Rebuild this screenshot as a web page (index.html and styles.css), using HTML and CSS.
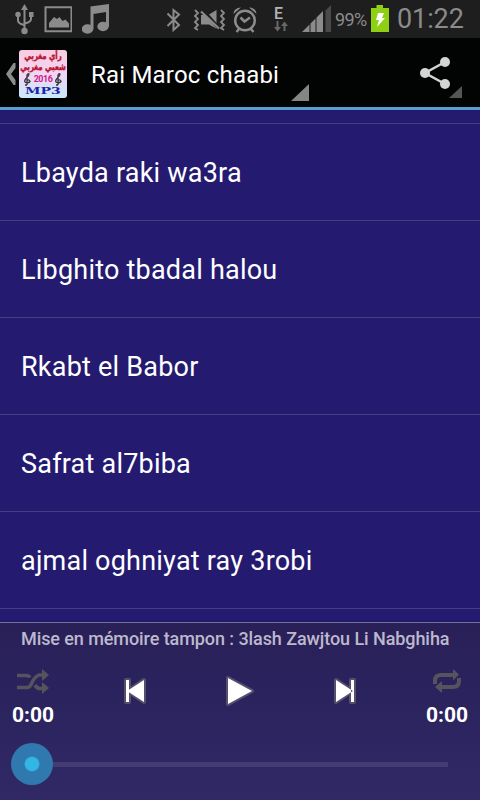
FILE: index.html
```html
<!DOCTYPE html>
<html lang="fr">
<head>
    <meta charset="UTF-8">
    <meta name="viewport" content="width=device-width, initial-scale=1.0">
    <title>Rai Maroc chaabi</title>
    <link rel="stylesheet" href="styles.css">
</head>
<body>
    <div class="status-bar">
        <div class="status-left">
            <!-- usb -->
            <svg width="20" height="38" viewBox="14 0 20 38">
                <path d="M24.500 9V31M18 16v4.500q0 3 6 4.500M31 15v4q0 3-6 4.500" fill="none" stroke="#8b8b8b" stroke-width="2"/>
                <path d="M24.500 4l3.500 6h-7zM29 12h4.500v5H29z" fill="#8b8b8b"/>
                <circle cx="18" cy="14.500" r="2.700" fill="#8b8b8b"/>
                <circle cx="24.500" cy="31" r="3.200" fill="#8b8b8b"/>
            </svg>
            <!-- picture -->
            <svg width="28" height="38" viewBox="45 0 28 38">
                <path d="M46.500 7.200h26v24h-26z" fill="none" stroke="#8b8b8b" stroke-width="2"/>
                <path d="M50 27.500V23l5-6 3 2 2.500-2 3 4 3-1.500 3.500 4v4z" fill="#8b8b8b"/>
            </svg>
            <!-- music -->
            <svg width="28" height="38" viewBox="82 0 28 38">
                <path d="M90.500 6.500L109 4v23h-3V12l-12.500 2v15h-3z" fill="#8b8b8b"/>
                <ellipse cx="87.500" cy="29" rx="5.800" ry="4.700" fill="#8b8b8b"/>
                <ellipse cx="103" cy="26.500" rx="5.700" ry="4.700" fill="#8b8b8b"/>
            </svg>
        </div>
        <div class="status-right">
            <!-- bluetooth -->
            <svg width="16" height="38" viewBox="166 0 16 38">
                <path d="M167.500 13.500l11.500 11.500-5.500 5V10l5.500 4.500-11.500 11.500" fill="none" stroke="#8b8b8b" stroke-width="2"/>
            </svg>
            <!-- vibrate / muted -->
            <svg width="34" height="38" viewBox="193 0 34 38">
                <path d="M195 10l3 3-3 3 3 3-3 3 3 3-3 3 3 2M221 10l3 3-3 3 3 3-3 3 3 3-3 3 3 2" fill="none" stroke="#8b8b8b" stroke-width="1.800"/>
                <path d="M201 15h4l12 14-8-4.500h-8zM209 14.500l7.500-4.500v13z" fill="#8b8b8b"/>
                <path d="M201 11.500L219 28.500" stroke="#8b8b8b" stroke-width="2.200"/>
            </svg>
            <!-- alarm -->
            <svg width="26" height="38" viewBox="232 0 26 38">
                <circle cx="245" cy="20.500" r="9.800" fill="none" stroke="#8b8b8b" stroke-width="2.500"/>
                <path d="M240.500 17.500l4 4 5.500-4M239 29l-2.500 3M251 29l2.500 3" fill="none" stroke="#8b8b8b" stroke-width="2.500"/>
                <path d="M233.500 14q0-6 7.500-6.500zM256.500 14q0-6-7.500-6.500z" fill="#8b8b8b"/>
            </svg>
            <div class="network">
                <span>E</span>
                <svg width="14" height="11" viewBox="0 0 14 11">
                    <path d="M2.500 0h2v6H7l-3.500 4.500L0 6h2.500zM9.500 10h2V5H14l-3.500-4.500L7 5h2.500z" fill="#686868"/>
                </svg>
            </div>
            <!-- signal -->
            <svg width="29" height="38" viewBox="302 0 29 38">
                <path d="M325.500 10.500L331 5v27h-5.500z" fill="#4a4a4a"/>
                <path d="M302 32l7.500-7.500V32zM310.500 23.500l5-5V32h-5zM316.500 17.500l6.500-6.500v21h-6.500z" fill="#8b8b8b"/>
            </svg>
            <span class="percent">99%</span>
            <!-- battery -->
            <svg width="18" height="38" viewBox="371 0 18 38">
                <path d="M371 8h5.500V5h6.500v3h6v24h-18z" fill="#8fd014"/>
                <path d="M378 13h6l-2 5h3l-8 9 2-7h-3z" fill="#fff"/>
            </svg>
            <span class="clock">01:22</span>
        </div>
    </div>

    <div class="header">
        <svg class="back" width="11" height="22" viewBox="0 0 11 22">
            <path d="M9.500 0v5L5 11l4.500 6v5H7.500L0 11 7.500 0z" fill="#8c8c8c"/>
        </svg>
        <div class="logo">
            <span class="logo-arabic">رأي مغربي</span>
            <span class="logo-arabic">شعبي مغربي</span>
            <div class="logo-year">
                <svg width="7" height="13" viewBox="0 0 7 13">
                    <path d="M3 12V2q1-2 2-1 0 2-2.500 4Q0 7 1 9q3 2 5-.5Q5.500 6 3 7.500M1 12h2" fill="none" stroke="#333" stroke-width="1.300"/>
                </svg>
                <span>2016</span>
                <svg width="7" height="13" viewBox="0 0 7 13">
                    <path d="M3 12V2q1-2 2-1 0 2-2.500 4Q0 7 1 9q3 2 5-.5Q5.500 6 3 7.500M1 12h2" fill="none" stroke="#333" stroke-width="1.300"/>
                </svg>
            </div>
            <span class="logo-mp3">MP3</span>
        </div>
        <div class="title">Rai Maroc chaabi</div>
        <svg class="spinner" width="18" height="17" viewBox="0 0 18 17">
            <path d="M18 0v17H0z" fill="#858585"/>
        </svg>
        <svg class="share" width="43" height="42" viewBox="419 56 43 42">
            <path d="M445 62l-20 11 20 11" fill="none" stroke="#d4d4d4" stroke-width="2.500"/>
            <circle cx="445" cy="62" r="5" fill="#d4d4d4"/>
            <circle cx="425" cy="73" r="5" fill="#d4d4d4"/>
            <circle cx="445" cy="84" r="5" fill="#d4d4d4"/>
            <path d="M462 86v12h-13z" fill="#555"/>
        </svg>
    </div>

    <div class="list">
        <div class="row row-cut"></div>
        <div class="row">Lbayda raki wa3ra</div>
        <div class="row">Libghito tbadal halou</div>
        <div class="row">Rkabt el Babor</div>
        <div class="row">Safrat al7biba</div>
        <div class="row">ajmal oghniyat ray 3robi</div>
    </div>

    <div class="player">
        <div class="now-playing">Mise en mémoire tampon : 3lash Zawjtou Li Nabghiha</div>
        <div class="controls">
            <div class="side">
                <svg width="34" height="28" viewBox="16 668 34 28">
                    <path d="M17 675.500h9q3 0 4 2M17 687.500h10q3 0 5-5t7-7.500h5M35 685q2 3.500 5 3.500h4" fill="none" stroke="#56535c" stroke-width="3.600"/>
                    <path d="M42 669l7 6-7 6zM42 682l7 6-7 6z" fill="#56535c"/>
                </svg>
                <span class="time">0:00</span>
            </div>
            <div class="buttons">
                <svg width="30" height="34" viewBox="120 674 30 34">
                    <path d="M126 680h3v22h-3zM144 680v22l-16-11z" fill="#fff" stroke="#56506d" stroke-width="4" stroke-linejoin="round"/>
                    <path d="M126 680h3v22h-3zM144 680v22l-17-11z" fill="#fff"/>
                </svg>
                <svg width="34" height="34" viewBox="223 674 34 34">
                    <path d="M228 678v26l24-13z" fill="#fff" stroke="#56506d" stroke-width="4" stroke-linejoin="round"/>
                    <path d="M228 678v26l24-13z" fill="#fff"/>
                </svg>
                <svg width="30" height="34" viewBox="330 674 30 34">
                    <path d="M351 680h3v22h-3zM336 680v22l16-11z" fill="#fff" stroke="#56506d" stroke-width="4" stroke-linejoin="round"/>
                    <path d="M351 680h3v22h-3zM336 680v22l17-11z" fill="#fff"/>
                </svg>
            </div>
            <div class="side">
                <svg width="30" height="28" viewBox="432 668 30 28">
                    <path d="M435 684v-3q0-6 6-6h13M459 678v3q0 6-6 6h-14" fill="none" stroke="#56535c" stroke-width="4"/>
                    <path d="M453 669l6 5.500-6 6zM442 681l-7 6 7 6z" fill="#56535c"/>
                </svg>
                <span class="time">0:00</span>
            </div>
        </div>
        <div class="seek">
            <div class="thumb"></div>
            <div class="track"></div>
        </div>
    </div>
</body>
</html>
```

FILE: styles.css
```css
body {
    margin: 0;
    width: 480px;
    height: 800px;
    display: flex;
    flex-direction: column;
    overflow: hidden;
    background-color: #241b70;
    font-family: Roboto, sans-serif;
    color: #fff;
}

svg {
    display: block;
    flex-shrink: 0;
}

.status-bar {
    height: 38px;
    flex-shrink: 0;
    display: flex;
    justify-content: space-between;
    background: #1e1e1e;
    color: #8b8b8b;
}

.status-left {
    display: flex;
    gap: 10px;
    padding-left: 14px;
}

.status-right {
    width: 314px;
    display: flex;
}

.status-right > svg:nth-child(2) {
    margin-left: 11px;
}

.status-right > svg:nth-child(3) {
    margin-left: 5px;
}

.network {
    width: 14px;
    margin: 5px 14px 0 16px;
}

.network span {
    display: block;
    height: 16px;
    font-size: 16px;
    line-height: 17px;
    font-weight: 500;
    color: #b5b5b5;
}

.percent {
    width: 36px;
    margin-left: 4px;
    font-size: 18px;
    line-height: 40px;
    letter-spacing: -0.6px;
}

.clock {
    margin-left: 8px;
    font-size: 27px;
    line-height: 38px;
    letter-spacing: -0.1px;
    white-space: nowrap;
}

.header {
    height: 69px;
    flex-shrink: 0;
    display: flex;
    background: #020303;
    border-bottom: 3px solid #559fd3;
}

.back {
    margin: 25px 2px 0 6px;
}

.logo {
    width: 48px;
    height: 48px;
    margin-top: 12px;
    border-radius: 3px;
    overflow: hidden;
    display: flex;
    flex-direction: column;
    align-items: center;
    background: linear-gradient(180deg, #f8cce0, #f1d5f4 50%, #c8eafa);
}

.logo-arabic {
    height: 11px;
    font-family: "DejaVu Sans", sans-serif;
    font-size: 7px;
    line-height: 12px;
    font-weight: bold;
    color: #b91431;
    -webkit-text-stroke: 0.3px #b91431;
    white-space: nowrap;
    transform: scaleY(1.35);
}

.logo-year {
    width: 38px;
    height: 14px;
    display: flex;
    justify-content: space-between;
    align-items: center;
    font-size: 9px;
    font-weight: bold;
    letter-spacing: -0.5px;
    color: #d01c87;
}

.logo-mp3 {
    font-family: "DejaVu Serif", serif;
    font-size: 10px;
    line-height: 10px;
    font-weight: bold;
    color: #1d24a7;
    transform: scaleX(1.4);
}

.title {
    width: 200px;
    padding-left: 24px;
    font-size: 24px;
    line-height: 74px;
    letter-spacing: 0.2px;
    white-space: nowrap;
}

.spinner {
    margin-top: 46px;
}

.share {
    margin: 18px 18px 0 auto;
}

.list {
    height: 512px;
    flex-shrink: 0;
    overflow: hidden;
}

.row {
    height: 96px;
    padding-left: 21px;
    border-bottom: 1px solid #453d86;
    font-size: 27px;
    line-height: 99px;
    letter-spacing: 0.22px;
    white-space: nowrap;
}

.row-cut {
    height: 13px;
}

.player {
    flex: 1;
    border-top: 1px solid #77709f;
    background: linear-gradient(#292058, #2b235e 40%, #312965);
}

.now-playing {
    height: 32px;
    padding-left: 21px;
    font-size: 18px;
    line-height: 32px;
    font-weight: 500;
    letter-spacing: -0.08px;
    color: #bdb9cd;
    white-space: nowrap;
}

.controls {
    height: 80px;
    display: flex;
    justify-content: space-between;
}

.side {
    width: 66px;
    padding-top: 13px;
    display: flex;
    flex-direction: column;
    align-items: center;
}

.time {
    margin-top: 7px;
    font-size: 21px;
    line-height: 25px;
    font-weight: bold;
}

.buttons {
    width: 240px;
    padding-top: 19px;
    display: flex;
    justify-content: space-between;
}

.seek {
    height: 58px;
    padding: 0 32px 0 11px;
    display: flex;
    align-items: center;
}

.thumb {
    width: 42px;
    height: 42px;
    border-radius: 50%;
    background: radial-gradient(circle, #33b5e5 6.5px, #3079ae 8px);
}

.track {
    flex: 1;
    height: 5px;
    background: #443b72;
}
```
